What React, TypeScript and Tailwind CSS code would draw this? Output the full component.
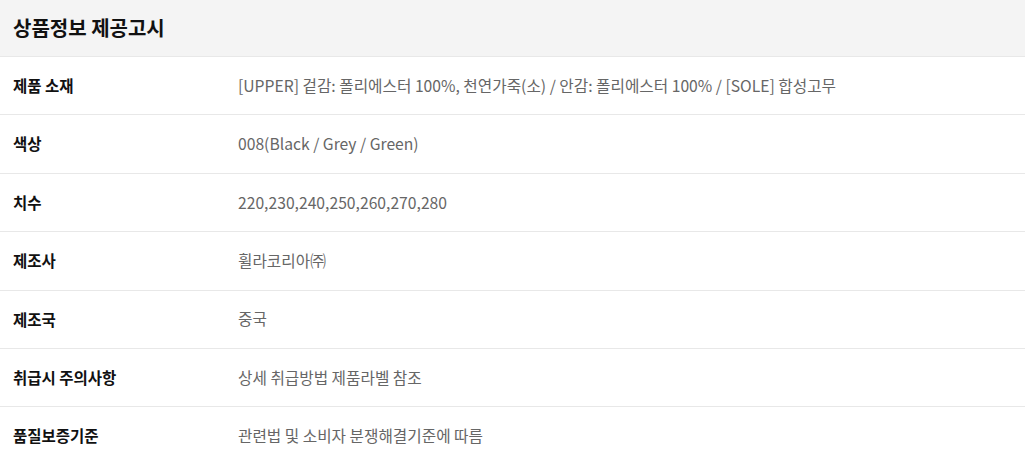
const rows: [string, string][] = [
  ['제품 소재', '[UPPER] 겉감: 폴리에스터 100%, 천연가죽(소) / 안감: 폴리에스터 100% / [SOLE] 합성고무'],
  ['색상', '008(Black / Grey / Green)'],
  ['치수', '220,230,240,250,260,270,280'],
  ['제조사', '휠라코리아㈜'],
  ['제조국', '중국'],
  ['취급시 주의사항', '상세 취급방법 제품라벨 참조'],
  ['품질보증기준', '관련법 및 소비자 분쟁해결기준에 따름'],
];

export default function App() {
  return (
    <div
      className="w-[1025px] h-[461px] overflow-hidden bg-white"
      style={{ fontFamily: '"Noto Sans CJK KR", "Noto Sans", sans-serif' }}
    >
      <div className="h-[57px] bg-[#f4f4f4] border-b border-[#e8e8e8] flex items-center px-[13px]">
        <h2 className="text-[20px] font-bold text-[#111]">상품정보 제공고시</h2>
      </div>
      {rows.map(([label, value]) => (
        <div key={label} className="h-[58.4px] flex items-center border-b border-[#e8e8e8]">
          <div className="w-[238px] pl-[13px] text-[15.5px] font-bold text-[#111]">{label}</div>
          <div className="text-[15.7px] text-[#666]">{value}</div>
        </div>
      ))}
    </div>
  );
}
